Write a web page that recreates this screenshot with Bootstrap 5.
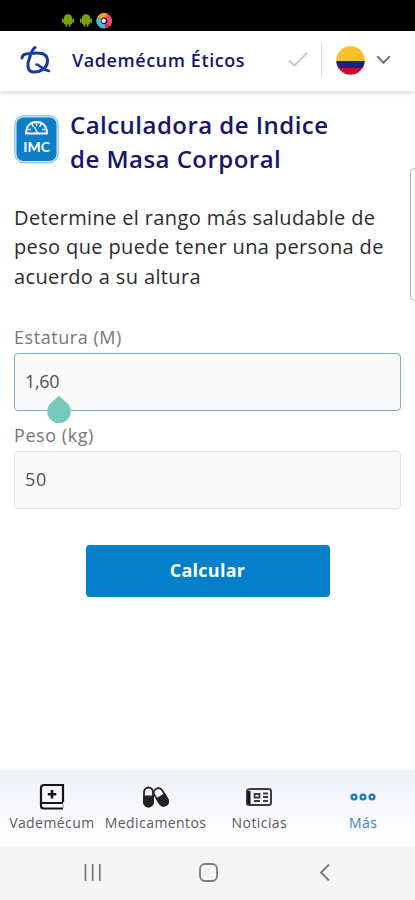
<!DOCTYPE html>
<html lang="es">
<head>
<meta charset="utf-8">
<meta name="viewport" content="width=device-width, initial-scale=1">
<title>Vademécum Éticos</title>
<link href="https://cdn.jsdelivr.net/npm/bootstrap@5.3.0/dist/css/bootstrap.min.css" rel="stylesheet">
<style>
body{font-family:"Open Sans","Noto Sans",sans-serif;background:#fff;color:#222}
.screen{height:900px;width:100%}
.statusbar{height:31px;background:#000;padding:13px 0 0 61px;gap:3px}
.topbar{height:60px;padding:0 0 2px;box-shadow:0 1px 6px rgba(0,0,0,.2);z-index:2}
.logo{margin-left:19px;width:33px}
.brand-name{margin-left:20px;font-size:18px;font-weight:600;color:#17166b;letter-spacing:.58px;line-height:24px}
.divider{width:1px;height:32px;background:#dedede;margin:0 14px 0 13px}
.chevron{margin:0 24px 0 11px}
.page{padding:17px 14px 0;background:#fff}
.imc-icon{margin-top:7px}
.heading{font-size:24px;line-height:34px;font-weight:600;color:#17166b;letter-spacing:.47px;margin-left:11px}
.intro{font-size:20px;line-height:29.3px;letter-spacing:.37px;margin-top:27px;color:#2c2c2c}
.first-field{margin-top:34px}
.second-field{margin-top:12px}
.form-label{font-size:18px;line-height:24px;color:#777;letter-spacing:.55px}
.field{height:58px;background:#fafafa;border:1px solid #e2e2e2;border-radius:4px;font-size:18px;padding:0 10px 1px;color:#505050;letter-spacing:.6px}
.field:focus,.field.current{border-color:#82a9dc;background:#fafafa;box-shadow:none;letter-spacing:-.3px}
.handle{left:33px;top:41px;z-index:3}
.btn-calc{width:244px;height:52px;margin-top:36px;background:#0480ca;border-radius:4px;font-weight:700;font-size:18px;letter-spacing:.25px;color:#fff}
.side-tab{right:0;top:168px;width:5px;height:133px;border:1px solid #b5b5b5;border-right:0;border-radius:5px 0 0 5px;background:#fff}
.tabs{height:76px;background:linear-gradient(#edf0f7,#fdfdff 75%)}
.tab{width:104px;font-size:14px;line-height:20px;letter-spacing:.42px;color:#5a5a5a;text-decoration:none;white-space:nowrap;padding-top:12px}
.tab svg{display:block;margin-bottom:3px}
.tab.active{color:#3b82ca}
.sysnav{height:54px;background:#f5f5f5}
</style>
<script src="https://cdn.jsdelivr.net/npm/bootstrap@5.3.0/dist/js/bootstrap.bundle.min.js"></script>
</head>
<body>
<div class="screen d-flex flex-column position-relative overflow-hidden">
  <div class="statusbar d-flex flex-shrink-0">
    <svg width="14" height="15" viewBox="0 0 14 15"><g fill="#78a20c"><path d="M3 5a4 3.7 0 0 1 8 0zM3 5h8v6.200H3z"/><rect x="1" y="5.500" width="1.800" height="4.500" rx=".8"/><rect x="11.200" y="5.500" width="1.800" height="4.500" rx=".8"/><rect x="4.500" y="10" width="1.800" height="3.800" rx=".8"/><rect x="7.700" y="10" width="1.800" height="3.800" rx=".8"/></g></svg>
    <svg width="14" height="15" viewBox="0 0 14 15" style="margin-left:1px"><g fill="#78a20c"><path d="M3 5a4 3.7 0 0 1 8 0zM3 5h8v6.200H3z"/><rect x="1" y="5.500" width="1.800" height="4.500" rx=".8"/><rect x="11.200" y="5.500" width="1.800" height="4.500" rx=".8"/><rect x="4.500" y="10" width="1.800" height="3.800" rx=".8"/><rect x="7.700" y="10" width="1.800" height="3.800" rx=".8"/></g></svg>
    <svg width="16" height="16" viewBox="0 0 16 16"><g fill="none" stroke-width="4.500"><path d="M3 5.500A5.500 5.500 0 0 1 11 3" stroke="#f7a32b"/><path d="M10 2.700A5.500 5.500 0 0 1 12 12" stroke="#ee4d78"/><path d="M12.500 11.500A5.500 5.500 0 0 1 8 13.200" stroke="#d5344b"/><path d="M9 13.200A5.500 5.500 0 0 1 3 5.500" stroke="#48b9db"/></g><circle cx="7.700" cy="7.700" r="2.300" fill="#f4e3e3"/></svg>
  </div>
  <nav class="topbar navbar flex-nowrap bg-white flex-shrink-0 position-relative">
    <svg class="logo flex-shrink-0" height="32" viewBox="0 0 33 32" fill="none" stroke="#153a9e" stroke-width="3" stroke-linecap="round"><path d="M3 14C3 10 7 9.500 11 9.500C20 8 28 9 28.500 16C29 23 22 28.500 14 28C8 27.500 8 20 10.500 14C12 9 13.500 5 16 3.500"/><path d="M17.500 20.500C20 20 22 25.500 30 27" stroke-width="2.600"/></svg>
    <span class="brand-name text-nowrap">Vademécum Éticos</span>
    <div class="d-flex align-items-center ms-auto flex-shrink-0">
      <svg width="20" height="16" viewBox="0 0 20 16" fill="none" stroke="#c7c7c7" stroke-width="2"><path d="M.8 8.500l5.700 5L19 1"/></svg>
      <span class="divider"></span>
      <svg width="29" height="29" viewBox="0 0 29 29"><clipPath id="disc"><circle cx="14.500" cy="14.500" r="14.300"/></clipPath><g clip-path="url(#disc)"><path fill="#fbc12d" d="M0 0h29v15H0z"/><path fill="#1c237e" d="M0 15h29v7H0z"/><path fill="#c80e2a" d="M0 22h29v7H0z"/></g></svg>
      <svg class="chevron" width="15" height="10" viewBox="0 0 15 10" fill="none" stroke="#737373" stroke-width="2"><path d="M1.200 1.200l6.300 6.500 6.300-6.500"/></svg>
    </div>
  </nav>
  <main class="page flex-grow-1">
    <div class="d-flex">
      <svg class="imc-icon flex-shrink-0" width="45" height="49" viewBox="0 0 45 49"><rect x=".8" y=".8" width="43.400" height="47" rx="9" fill="#d7eafa" stroke="#7bb7e2" stroke-width="1"/><rect x="2.500" y="2.500" width="40" height="43.500" rx="7" fill="#0d7ec6"/><path d="M12 18.500c0-7 4-11.500 10.500-11.500S33 11.500 33 18.500z" fill="none" stroke="#fff" stroke-width="2"/><path d="M14 14.500h3m11 0h3M18 9l1.500 3M27 9l-1.500 3M22.500 7v4M20.500 12l3 6" stroke="#fff" stroke-width="1.400"/><text x="22.700" y="36.500" text-anchor="middle" font-family="Lato,sans-serif" font-size="14" font-weight="700" fill="#fff">IMC</text></svg>
      <h1 class="heading mb-0 text-nowrap">Calculadora de Indice<br>de Masa Corporal</h1>
    </div>
    <p class="intro mb-0 text-nowrap">Determine el rango más saludable de<br>peso que puede tener una persona de<br>acuerdo a su altura</p>
    <form>
      <div class="first-field">
        <label class="form-label d-block mb-1" for="height">Estatura (M)</label>
        <div class="position-relative">
          <input id="height" class="form-control field current" value="1,60">
          <svg class="handle position-absolute" width="24" height="29" viewBox="0 0 24 29"><path d="M12 1.500l8.300 7.800a11.700 11.700 0 1 1-16.600 0z" fill="#77c8be"/></svg>
        </div>
      </div>
      <div class="second-field">
        <label class="form-label d-block mb-1" for="weight">Peso (kg)</label>
        <input id="weight" class="form-control field" value="50">
      </div>
      <button type="button" class="btn btn-calc d-block mx-auto p-0">Calcular</button>
    </form>
  </main>
  <div class="side-tab position-absolute"></div>
  <nav class="tabs d-flex flex-shrink-0">
    <a href="#" class="tab d-flex flex-column align-items-center"><svg width="26" height="28" viewBox="0 0 26 28" fill="none" stroke="#151515" stroke-width="2.200"><path d="M24 20V3H5a3 3 0 0 0-3 3v18c0 1.500 1 2.500 3 2.500h19M2 21h22"/><path d="M24 21v5" stroke="#888" stroke-width="1"/><path d="M13 8v8.500M8.800 12.200h8.500" stroke-width="2.600"/></svg>Vademécum</a>
    <a href="#" class="tab d-flex flex-column align-items-center"><svg width="28" height="28" viewBox="0 0 28 28" fill="none" stroke="#222" stroke-width="1.800"><g transform="translate(0 1.500)"><rect x="2" y="4" width="9" height="19" rx="4.500"/><path d="M2 13h9v5.500a4.500 4.500 0 0 1-9 0z" fill="#222"/><g transform="rotate(-32 19 13.500)"><rect x="14.500" y="4" width="9" height="19" rx="4.500"/><path d="M14.500 13h9v5.500a4.500 4.500 0 0 1-9 0z" fill="#222"/></g></g></svg>Medicamentos</a>
    <a href="#" class="tab d-flex flex-column align-items-center"><svg width="28" height="28" viewBox="0 0 28 28" fill="none" stroke="#3d3d3d" stroke-width="2"><path d="M6 7h17.500q2.500 0 2.500 2v12q0 2-2 2H4q-2 0-2-2V9q0-2 4-2z"/><path d="M4 9v13" stroke="#151515" stroke-width="3"/><path d="M9.500 12h5v3.500h-5zM18 11.500h5M18 15h5M9 19h6M18 19h5" stroke-width="1.800"/></svg>Noticias</a>
    <a href="#" class="tab active d-flex flex-column align-items-center"><svg width="26" height="28" viewBox="0 0 26 28" fill="none" stroke="#187cc8" stroke-width="2.300"><circle cx="4" cy="15" r="2.400"/><circle cx="13" cy="15" r="2.400"/><circle cx="22" cy="15" r="2.400"/></svg>Más</a>
  </nav>
  <div class="sysnav d-flex align-items-center flex-shrink-0">
    <svg width="415" height="54" viewBox="0 0 415 54" fill="none" stroke="#7c7c7c" stroke-width="1.800"><path d="M85.500 18v17M92.700 18v17M99.800 18v17M329 18.500l-8 8 8 8"/><rect x="200" y="18" width="17" height="17" rx="5"/></svg>
  </div>
</div>
</body>
</html>
